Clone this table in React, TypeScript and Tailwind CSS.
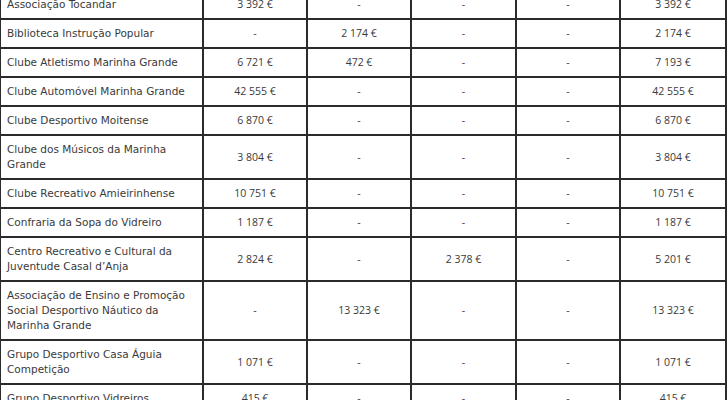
import React from "react";

type Row = [string, string, string, string, string, string];

const rows: Row[] = [
  ["Associação Tocandar", "3 392 €", "-", "-", "-", "3 392 €"],
  ["Biblioteca Instrução Popular", "-", "2 174 €", "-", "-", "2 174 €"],
  ["Clube Atletismo Marinha Grande", "6 721 €", "472 €", "-", "-", "7 193 €"],
  ["Clube Automóvel Marinha Grande", "42 555 €", "-", "-", "-", "42 555 €"],
  ["Clube Desportivo Moitense", "6 870 €", "-", "-", "-", "6 870 €"],
  ["Clube dos Músicos da Marinha Grande", "3 804 €", "-", "-", "-", "3 804 €"],
  ["Clube Recreativo Amieirinhense", "10 751 €", "-", "-", "-", "10 751 €"],
  ["Confraria da Sopa do Vidreiro", "1 187 €", "-", "-", "-", "1 187 €"],
  ["Centro Recreativo e Cultural da Juventude Casal d’Anja", "2 824 €", "-", "2 378 €", "-", "5 201 €"],
  ["Associação de Ensino e Promoção Social Desportivo Náutico da Marinha Grande", "-", "13 323 €", "-", "-", "13 323 €"],
  ["Grupo Desportivo Casa Águia Competição", "1 071 €", "-", "-", "-", "1 071 €"],
  ["Grupo Desportivo Vidreiros", "415 €", "-", "-", "-", "415 €"],
];

export default function App() {
  return (
    <div className="w-[728px] h-[400px] overflow-hidden bg-white">
      <table
        className="-mt-[11px] -ml-[1px] w-[726px] table-fixed border-collapse text-[#3a3a3a]"
      >
        <colgroup>
          <col className="w-[203px]" />
          <col className="w-[104px]" />
          <col className="w-[104px]" />
          <col className="w-[105px]" />
          <col className="w-[104px]" />
          <col className="w-[106px]" />
        </colgroup>
        <tbody>
          {rows.map((r, i) => (
            <tr key={i}>
              <td className="border-2 border-[#2b2b2b] px-[6px] py-[6px] text-left align-middle text-[10.5px] leading-[15px] [font-family:'DejaVu_Sans',sans-serif]">
                {r[0]}
              </td>
              {r.slice(1).map((c, j) => (
                <td
                  key={j}
                  className="border-2 border-[#2b2b2b] px-[4px] py-[6px] text-center align-middle text-[10.5px] leading-[15px] [font-family:'Open_Sans',sans-serif]"
                >
                  {c}
                </td>
              ))}
            </tr>
          ))}
        </tbody>
      </table>
    </div>
  );
}
